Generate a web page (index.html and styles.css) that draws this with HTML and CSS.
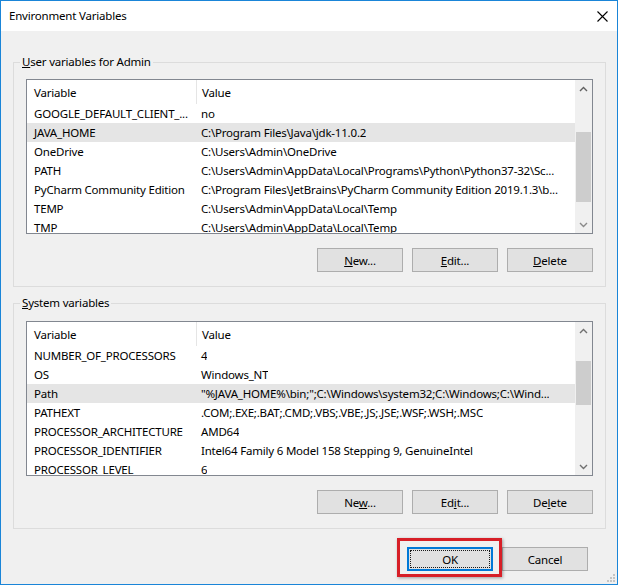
FILE: index.html
```html
<html><head>
<meta charset="UTF-8">
<meta name="viewport" content="width=device-width, initial-scale=1.0">
<title>Environment Variables</title>
<link rel="stylesheet" href="styles.css">
</head>
<body>
  <div class="window">
    <div class="titlebar">
      <span class="title">Environment Variables</span>
      <svg class="close" width="11" height="11" viewBox="0 0 11 11">
        <path d="M0.5 0.5 L10.5 10.5 M10.5 0.5 L0.5 10.5" stroke="#000" stroke-width="1.1" fill="none"/>
      </svg>
    </div>

    <div class="content">
      <fieldset class="group">
        <legend><u>U</u>ser variables for Admin</legend>
        <div class="listbox">
          <div class="rows">
            <div class="row head"><span class="name">Variable</span><span class="value">Value</span></div>
            <div class="row"><span class="name">GOOGLE_DEFAULT_CLIENT_...</span><span class="value">no</span></div>
            <div class="row selected"><span class="name">JAVA_HOME</span><span class="value">C:\Program Files\Java\jdk-11.0.2</span></div>
            <div class="row"><span class="name">OneDrive</span><span class="value">C:\Users\Admin\OneDrive</span></div>
            <div class="row"><span class="name">PATH</span><span class="value">C:\Users\Admin\AppData\Local\Programs\Python\Python37-32\Sc...</span></div>
            <div class="row"><span class="name">PyCharm Community Edition</span><span class="value">C:\Program Files\JetBrains\PyCharm Community Edition 2019.1.3\b...</span></div>
            <div class="row"><span class="name">TEMP</span><span class="value">C:\Users\Admin\AppData\Local\Temp</span></div>
            <div class="row"><span class="name">TMP</span><span class="value">C:\Users\Admin\AppData\Local\Temp</span></div>
          </div>
          <div class="scrollbar">
            <span class="arrow"><svg width="9" height="6" viewBox="0 0 9 6"><path d="M1 5 L4.5 1.5 L8 5" stroke="#606060" stroke-width="1.4" fill="none"/></svg></span>
            <span class="track"><span class="thumb" style="margin-top: 35px; height: 70px"></span></span>
            <span class="arrow"><svg width="9" height="6" viewBox="0 0 9 6"><path d="M1 1 L4.5 4.5 L8 1" stroke="#8a8a8a" stroke-width="1.4" fill="none"/></svg></span>
          </div>
        </div>
        <div class="buttons">
          <button><u>N</u>ew...</button>
          <button><u>E</u>dit...</button>
          <button><u>D</u>elete</button>
        </div>
      </fieldset>

      <fieldset class="group system">
        <legend><u>S</u>ystem variables</legend>
        <div class="listbox">
          <div class="rows">
            <div class="row head"><span class="name">Variable</span><span class="value">Value</span></div>
            <div class="row"><span class="name">NUMBER_OF_PROCESSORS</span><span class="value">4</span></div>
            <div class="row"><span class="name">OS</span><span class="value">Windows_NT</span></div>
            <div class="row selected"><span class="name">Path</span><span class="value">"%JAVA_HOME%\bin;";C:\Windows\system32;C:\Windows;C:\Wind...</span></div>
            <div class="row"><span class="name">PATHEXT</span><span class="value">.COM;.EXE;.BAT;.CMD;.VBS;.VBE;.JS;.JSE;.WSF;.WSH;.MSC</span></div>
            <div class="row"><span class="name">PROCESSOR_ARCHITECTURE</span><span class="value">AMD64</span></div>
            <div class="row"><span class="name">PROCESSOR_IDENTIFIER</span><span class="value">Intel64 Family 6 Model 158 Stepping 9, GenuineIntel</span></div>
            <div class="row"><span class="name">PROCESSOR_LEVEL</span><span class="value">6</span></div>
          </div>
          <div class="scrollbar">
            <span class="arrow"><svg width="9" height="6" viewBox="0 0 9 6"><path d="M1 5 L4.5 1.5 L8 5" stroke="#707070" stroke-width="1.4" fill="none"/></svg></span>
            <span class="track"><span class="thumb" style="margin-top: 22px; height: 44px"></span></span>
            <span class="arrow"><svg width="9" height="6" viewBox="0 0 9 6"><path d="M1 1 L4.5 4.5 L8 1" stroke="#707070" stroke-width="1.4" fill="none"/></svg></span>
          </div>
        </div>
        <div class="buttons">
          <button>Ne<u>w</u>...</button>
          <button>Ed<u>i</u>t...</button>
          <button>De<u>l</u>ete</button>
        </div>
      </fieldset>

      <div class="dialog-buttons">
        <button class="default">OK</button>
        <button>Cancel</button>
      </div>
    </div>

    <svg class="grip" width="9" height="9" viewBox="0 0 9 9">
      <rect x="7" y="1" width="2" height="2" fill="#c4c4c4"/>
      <rect x="4" y="4" width="2" height="2" fill="#c4c4c4"/>
      <rect x="7" y="4" width="2" height="2" fill="#c4c4c4"/>
      <rect x="1" y="7" width="2" height="2" fill="#c4c4c4"/>
      <rect x="4" y="7" width="2" height="2" fill="#c4c4c4"/>
      <rect x="7" y="7" width="2" height="2" fill="#c4c4c4"/>
    </svg>
  </div>
</body>
</html>
```

FILE: styles.css
```css
body, html {
  margin: 0;
  padding: 0;
  font-family: "Noto Sans", "Open Sans", sans-serif;
  font-size: 11.5px;
  letter-spacing: -0.2px;
  color: #000;
  background-color: #f0f0f0;
}
.window {
  position: relative;
  width: 618px;
  height: 585px;
  box-sizing: border-box;
  border: 1px solid #1a85d8;
  background-color: #f0f0f0;
  display: flex;
  flex-direction: column;
}
.titlebar {
  height: 30px;
  background-color: #fff;
  display: flex;
  align-items: center;
  justify-content: space-between;
  padding: 0 9px 0 8px;
}
.title {
  line-height: 16px;
}
.close {
  margin-top: 1px;
}
.content {
  padding: 0 11px 0 12px;
  display: flex;
  flex-direction: column;
}
.group {
  margin: 23px 0 0 0;
  padding: 9px 12px 14px 12px;
  border: 1px solid #dcdcdc;
  min-width: 0;
}
.group.system {
  margin-top: 8px;
  padding-top: 10px;
}
.group legend {
  padding: 0 2px;
  margin-left: -6px;
  line-height: 16px;
}
.listbox {
  display: flex;
  height: 155px;
  box-sizing: border-box;
  border: 1px solid #828790;
  background-color: #fff;
}
.rows {
  flex-grow: 1;
  overflow: hidden;
}
.row {
  display: flex;
  height: 19px;
  align-items: center;
  white-space: nowrap;
}
.row.head {
  height: 24px;
}
.row.selected {
  background-color: #e5e5e5;
}
.name {
  width: 162px;
  flex-shrink: 0;
  padding-left: 7px;
  overflow: hidden;
}
.value {
  padding-left: 5px;
  overflow: hidden;
}
.row.head .name {
  align-self: stretch;
  display: flex;
  align-items: center;
  border-right: 1px solid #e5e5e5;
}
.scrollbar {
  width: 17px;
  flex-shrink: 0;
  display: flex;
  flex-direction: column;
  background-color: #f0f0f0;
}
.arrow {
  height: 17px;
  display: flex;
  align-items: center;
  justify-content: center;
}
.track {
  flex-grow: 1;
  display: flex;
  flex-direction: column;
  align-items: center;
}
.thumb {
  width: 15px;
  background-color: #cdcdcd;
}
.buttons {
  display: flex;
  justify-content: flex-end;
  gap: 9px;
  margin-top: 14px;
}
button {
  width: 86px;
  height: 24px;
  padding: 0;
  font-family: "Noto Sans", "Open Sans", sans-serif;
  font-size: 11.5px;
  letter-spacing: -0.2px;
  color: #000;
  background-color: #e1e1e1;
  border: 1px solid #adadad;
}
.dialog-buttons {
  display: flex;
  justify-content: flex-end;
  gap: 9px;
  margin-top: 18px;
  padding-right: 18px;
}
button.default {
  position: relative;
  border-color: #0078d7;
  box-shadow: inset 0 0 0 1px #0078d7;
}
button.default::before {
  content: "";
  position: absolute;
  top: 2px;
  left: 2px;
  right: 2px;
  bottom: 2px;
  border: 1px dotted #1a1a1a;
}
button.default::after {
  content: "";
  position: absolute;
  top: -10px;
  left: -11px;
  right: -10px;
  bottom: -7px;
  border: 3px solid #d71f27;
  box-shadow: 1px 1px 3px rgba(0, 0, 0, 0.35);
}
.grip {
  position: absolute;
  right: 2px;
  bottom: 2px;
}
```
